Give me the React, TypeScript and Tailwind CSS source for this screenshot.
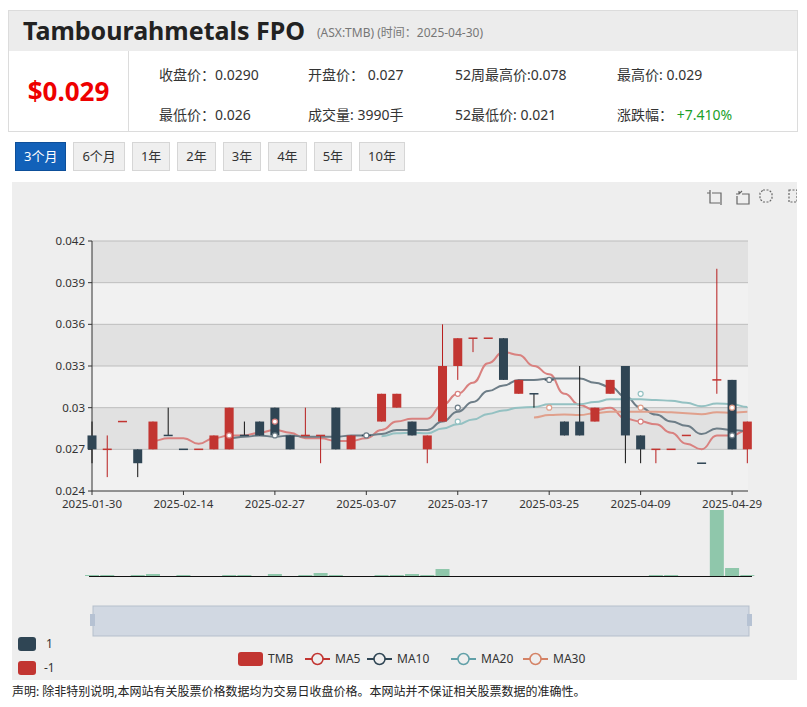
import React from "react";

type C = [number, number, number, number, "r" | "d"];
const D: C[] = [
  [27, 28, 26, 29, "d"], [27, 27, 25, 28, "r"], [29, 29, 29, 29, "r"], [26, 27, 25, 27, "d"], [27, 29, 27, 29, "r"],
  [28, 28, 28, 30, "d"], [27, 27, 27, 27, "d"], [27, 27, 27, 27, "r"], [27, 28, 27, 28, "r"], [27, 30, 27, 30, "r"],
  [28, 28, 28, 29, "d"], [28, 29, 28, 29, "d"], [28, 30, 28, 30, "d"], [27, 28, 27, 28, "d"], [28, 28, 28, 30, "r"],
  [28, 28, 26, 28, "r"], [27, 30, 27, 30, "d"], [27, 28, 27, 28, "r"], [28, 28, 28, 28, "d"], [29, 31, 29, 31, "r"],
  [30, 31, 30, 31, "r"], [28, 29, 28, 29, "d"], [27, 28, 26, 28, "r"], [29, 33, 29, 36, "r"], [33, 35, 32, 35, "r"],
  [35, 35, 34, 35, "r"], [35, 35, 35, 35, "r"], [32, 35, 32, 35, "d"], [31, 32, 31, 32, "r"], [31, 31, 30, 31, "d"],
  [32, 32, 32, 32, "d"], [28, 29, 28, 29, "d"], [28, 29, 28, 33, "d"], [29, 30, 29, 30, "r"], [31, 32, 31, 32, "r"],
  [28, 33, 26, 33, "d"], [27, 28, 26, 28, "d"], [27, 27, 26, 27, "r"], [27, 27, 27, 27, "r"], [28, 28, 28, 28, "r"],
  [26, 26, 26, 26, "d"], [32, 32, 31, 40, "r"], [27, 32, 27, 32, "d"], [27, 29, 26, 29, "r"],
];
const VOL = [1, 1, 0, 1, 2, 0, 1, 0, 0, 1, 1, 0, 2, 0, 1, 3, 1, 0, 0, 1, 1, 2, 1, 7, 0, 0, 0, 0, 0, 0, 0, 0, 0, 0, 0, 0, 0, 1, 1, 0, 0, 66, 8, 1];

const X = (i: number) => 92 + i * 15.24;
const Y = (v: number) => 241 + ((42 - v) / 18) * 250;
const closes = D.map((c) => (c[4] === "r" ? c[1] : c[0]));
const ma = (n: number) =>
  closes.map((_, i) => (i < n - 1 ? null : closes.slice(i - n + 1, i + 1).reduce((a, b) => a + b, 0) / n));

function path(vals: (number | null)[]) {
  const pts = vals.map((v, i) => (v == null ? null : [X(i), Y(v)])).filter(Boolean) as number[][];
  if (!pts.length) return "";
  let d = `M${pts[0][0]},${pts[0][1]}`;
  for (let i = 1; i < pts.length; i++) {
    const [x0, y0] = pts[i - 1];
    const [x1, y1] = pts[i];
    const mx = (x0 + x1) / 2;
    d += ` C${mx},${y0} ${mx},${y1} ${x1},${y1}`;
  }
  return d;
}

const MAS: [number, string][] = [
  [5, "#d9817f"],
  [10, "#6d7d87"],
  [20, "#94c1c2"],
  [30, "#e0a08c"],
];
const dates = ["2025-01-30", "2025-02-14", "2025-02-27", "2025-03-07", "2025-03-17", "2025-03-25", "2025-04-09", "2025-04-29"];

function Chart() {
  return (
    <svg width="785" height="498" className="block" style={{ fontFamily: "'Noto Sans','Noto Sans CJK SC',sans-serif" }}>
      <g transform="translate(-12,-182)">
        <g fill="none" stroke="#666" strokeWidth="1.2">
          <path d="M710 190v3M707 193h3v10h10M712 193h9v10M721 205v-2" />
          <path d="M736 194h3l3-3M739 191v3M742 194h7v10h-12v-8" />
          <path d="M763 190h6l3 3v6l-3 3h-6l-3-3v-6z" strokeDasharray="2 1.5" />
          <path d="M789 190h8v12h-8z" strokeDasharray="2 1.5" />
        </g>
        {[0, 1, 2, 3, 4, 5].map((k) => (
          <rect key={k} x={92} y={241 + k * 41.67} width={656} height={41.67} fill={k % 2 === 0 ? "#e1e1e1" : "#f1f1f1"} />
        ))}
        {[0, 1, 2, 3, 4, 5].map((k) => (
          <line key={k} x1={92} x2={748} y1={241 + k * 41.67} y2={241 + k * 41.67} stroke="#bdbdbd" />
        ))}
        <line x1={92} x2={92} y1={241} y2={491} stroke="#333" />
        <line x1={92} x2={748} y1={491} y2={491} stroke="#333" />
        {["0.042", "0.039", "0.036", "0.033", "0.03", "0.027", "0.024"].map((t, k) => (
          <g key={t}>
            <line x1={88} x2={92} y1={241 + k * 41.67} y2={241 + k * 41.67} stroke="#333" />
            <text x={85} y={245 + k * 41.67} textAnchor="end" fontSize="11.5" fill="#333">{t}</text>
          </g>
        ))}
        {dates.map((d, k) => (
          <g key={d}>
            <line x1={X(k * 6)} x2={X(k * 6)} y1={491} y2={495} stroke="#333" />
            <text x={X(k * 6)} y={508} textAnchor="middle" fontSize="11.5" fill="#333">{d}</text>
          </g>
        ))}
        {MAS.map(([n, c]) => (
          <path key={n} d={path(ma(n))} fill="none" stroke={c} strokeWidth="2" />
        ))}
        {D.map((c, i) => {
          const col = c[4] === "r" ? "#c23531" : "#2f4554";
          const x = X(i);
          const top = Y(c[1]);
          const bot = Y(c[0]);
          return (
            <g key={i}>
              {c[3] !== c[2] && <line x1={x} x2={x} y1={Y(c[3])} y2={Y(c[2])} stroke={c[4] === "r" ? "#b71c1c" : "#111"} />}
              <rect x={x - 4.5} y={top - (top === bot ? 0.75 : 0)} width={9} height={Math.max(1.5, bot - top)} fill={col} />
            </g>
          );
        })}
        {[[9, 28, "#d9817f"], [12, 29, "#d9817f"], [12, 28, "#6d7d87"], [18, 28, "#6d7d87"], [24, 31, "#d9817f"], [24, 30, "#6d7d87"], [24, 29, "#94c1c2"], [30, 32, "#6d7d87"], [30, 30, "#e0a08c"], [36, 31, "#94c1c2"], [36, 30, "#e0a08c"], [36, 29, "#d9817f"], [42, 30, "#e0a08c"], [42, 28, "#6d7d87"]].map(([i, v, c], k) => (
          <circle key={k} cx={X(i as number)} cy={Y(v as number)} r={2.5} fill="#fff" stroke={c as string} strokeWidth="1.2" />
        ))}
        {VOL.map((v, i) =>
          v > 0 ? <rect key={i} x={X(i) - 7} y={576 - v} width={14} height={v} fill="#8fc7ab" /> : null
        )}
        <line x1={89} x2={752} y1={576.5} y2={576.5} stroke="#111" />
        <rect x={93} y={606} width={656} height={30} fill="#d1d8e2" stroke="#b5bfcc" />
        <rect x={90} y={614} width={5} height={12} fill="#b6c2d3" />
        <rect x={747} y={614} width={5} height={12} fill="#b6c2d3" />
        <rect x={18} y={637} width={18} height={14} rx={3} fill="#2f4554" />
        <text x={46} y={648} fontSize="12" fill="#333">1</text>
        <rect x={18} y={661} width={18} height={14} rx={3} fill="#c23531" />
        <text x={44} y={672} fontSize="12" fill="#333">-1</text>
        <rect x={238} y={652} width={25} height={14} rx={3} fill="#c23531" />
        <text x={268} y={663} fontSize="12" fill="#333">TMB</text>
        {[["MA5", "#c23531", 305], ["MA10", "#2f4554", 367], ["MA20", "#61a0a8", 451], ["MA30", "#d48265", 523]].map(([t, c, x]) => (
          <g key={t as string}>
            <line x1={x as number} x2={(x as number) + 25} y1={659} y2={659} stroke={c as string} strokeWidth="2" />
            <circle cx={(x as number) + 12.5} cy={659} r={5.5} fill="#eee" stroke={c as string} strokeWidth="1.5" />
            <text x={(x as number) + 30} y={663} fontSize="12" fill="#333">{t}</text>
          </g>
        ))}
      </g>
    </svg>
  );
}

export default function App() {
  const f = { fontFamily: "'Noto Sans','Noto Sans CJK SC',sans-serif" };
  const btns = ["3个月", "6个月", "1年", "2年", "3年", "4年", "5年", "10年"];
  return (
    <div className="w-[807px] h-[707px] bg-white pt-[10px] text-[#333]" style={f}>
      <div className="ml-[8px] w-[790px] border border-[#dcdcdc]">
        <div className="h-[40px] bg-[#ececec] flex items-center pl-[14px] gap-3">
          <span className="text-[25px] font-bold text-[#222]">Tambourahmetals FPO</span>
          <span className="text-[12px] text-[#777] mt-1">(ASX:TMB)&nbsp;(时间：2025-04-30)</span>
        </div>
        <div className="flex h-[80px]">
          <div className="w-[120px] border-r border-[#dcdcdc] flex items-center justify-center text-[#e00] text-[26px] font-bold">$0.029</div>
          <div className="grid grid-cols-[149px_147px_162px_150px] pl-[30px] pt-[14px] gap-y-[13px] text-[14px] leading-[20px]">
            <span>收盘价：0.0290</span><span>开盘价：&nbsp;0.027</span><span>52周最高价:0.078</span><span>最高价: 0.029</span>
            <span>最低价：0.026</span><span>成交量: 3990手</span><span>52最低价: 0.021</span>
            <span>涨跌幅：&nbsp;<span className="text-[#1a9f29]">+7.410%</span></span>
          </div>
        </div>
      </div>
      <div className="flex gap-[7px] ml-[15px] mt-[10px]">
        {btns.map((b, i) => (
          <div key={b} className={`h-[29px] px-[8px] flex items-center text-[13px] border ${i === 0 ? "bg-[#1261b9] border-[#0d4f9a] text-white" : "bg-[#efefef] border-[#d6d6d6] text-[#333]"}`}>{b}</div>
        ))}
      </div>
      <div className="ml-[12px] mt-[11px] w-[785px] h-[498px] bg-[#eeeeee]">
        <Chart />
      </div>
      <div className="ml-[12px] mt-[3px] text-[12px] text-[#222]">声明: 除非特别说明,本网站有关股票价格数据均为交易日收盘价格。本网站并不保证相关股票数据的准确性。</div>
    </div>
  );
}
